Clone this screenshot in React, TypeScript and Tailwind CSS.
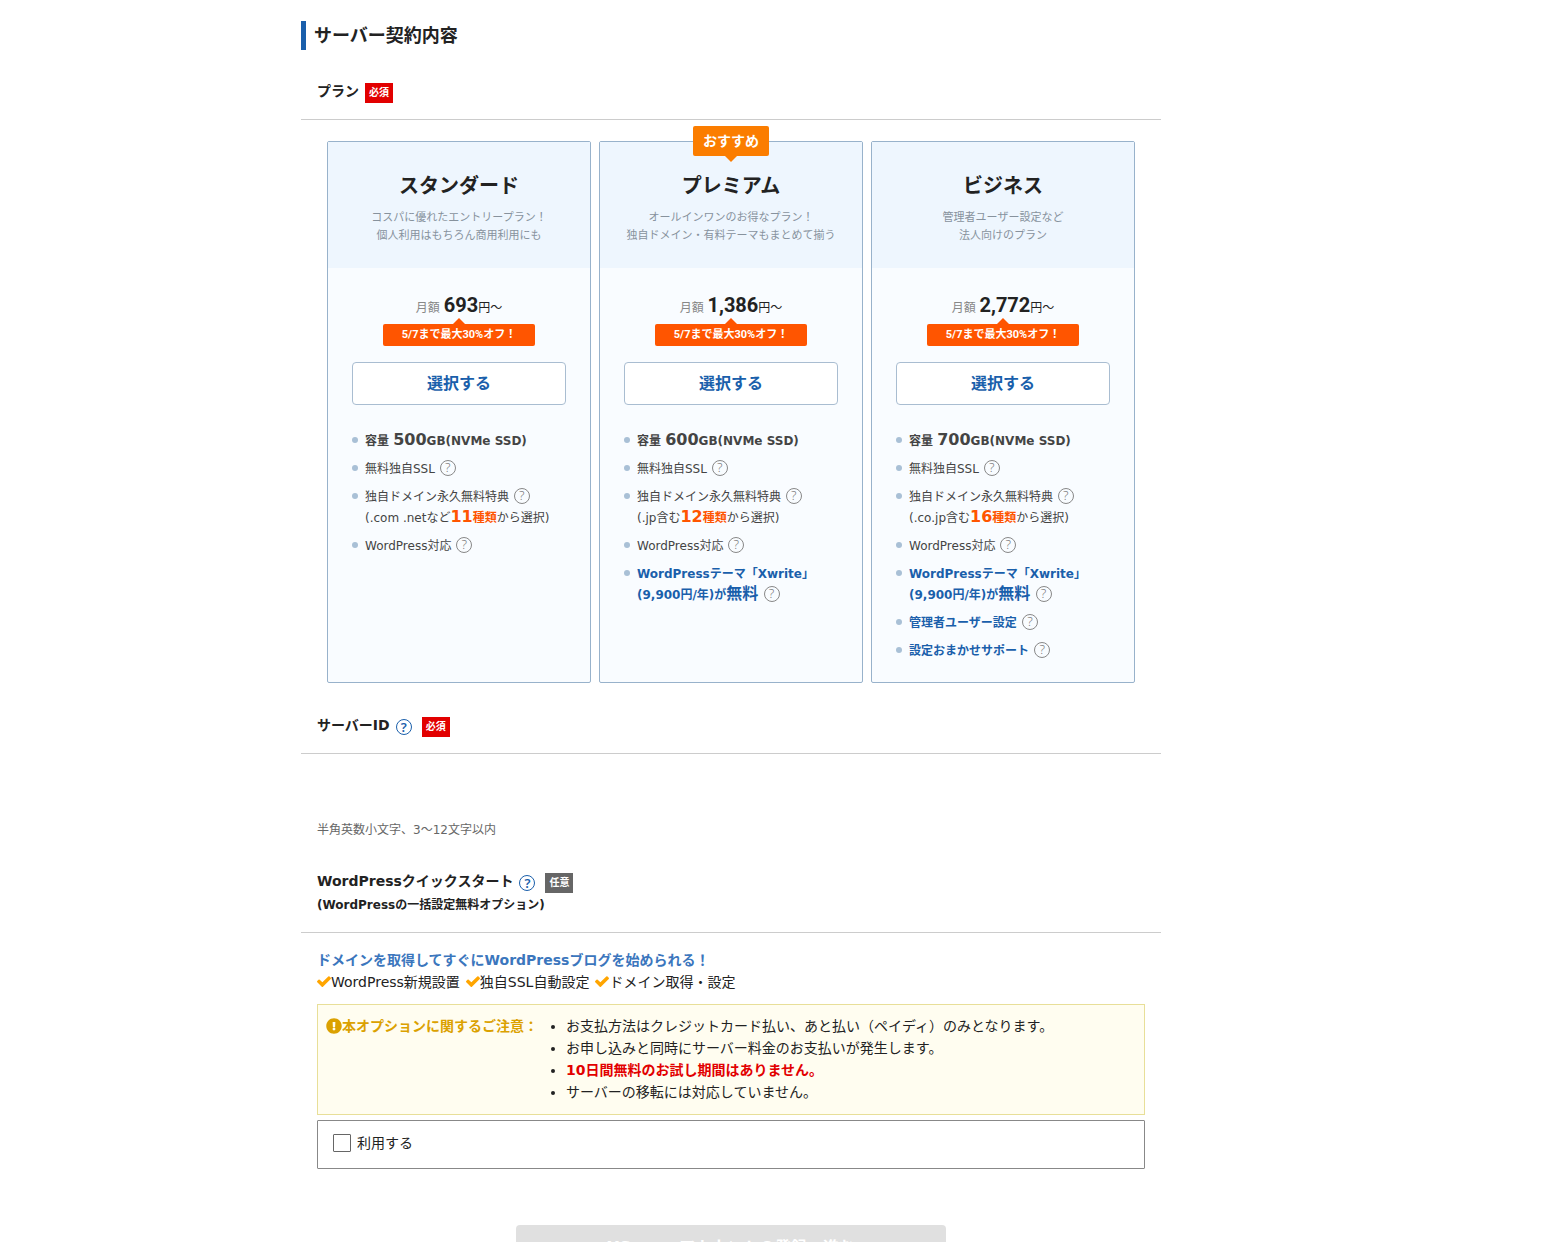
import type { ReactNode } from 'react';
import { FaExclamationCircle } from 'react-icons/fa';

interface Feature {
  content: ReactNode;
  help?: boolean;
  strong?: boolean;
}

interface Plan {
  name: string;
  description: [string, string];
  price: string;
  recommended?: boolean;
  features: Feature[];
}

function Capacity({ size }: { size: string }) {
  return (
    <b>
      容量 <span className="text-base leading-none">{size}</span>GB(NVMe SSD)
    </b>
  );
}

function Domain({ types, count }: { types: string; count: string }) {
  return (
    <>
      独自ドメイン永久無料特典 <HelpButton />
      <br />
      ({types}
      <b className="text-[#ff5500]">
        <span className="text-base leading-none">{count}</span>種類
      </b>
      から選択)
    </>
  );
}

const themeFeature: Feature = {
  strong: true,
  help: true,
  content: (
    <>
      WordPressテーマ「Xwrite」
      <br />
      (9,900円/年)が<span className="text-base leading-none">無料</span>
    </>
  ),
};

const plans: Plan[] = [
  {
    name: 'スタンダード',
    description: ['コスパに優れたエントリープラン！', '個人利用はもちろん商用利用にも'],
    price: '693',
    features: [
      { content: <Capacity size="500" /> },
      { content: '無料独自SSL', help: true },
      { content: <Domain types=".com .netなど" count="11" /> },
      { content: 'WordPress対応', help: true },
    ],
  },
  {
    name: 'プレミアム',
    description: ['オールインワンのお得なプラン！', '独自ドメイン・有料テーマもまとめて揃う'],
    price: '1,386',
    recommended: true,
    features: [
      { content: <Capacity size="600" /> },
      { content: '無料独自SSL', help: true },
      { content: <Domain types=".jp含む" count="12" /> },
      { content: 'WordPress対応', help: true },
      themeFeature,
    ],
  },
  {
    name: 'ビジネス',
    description: ['管理者ユーザー設定など', '法人向けのプラン'],
    price: '2,772',
    features: [
      { content: <Capacity size="700" /> },
      { content: '無料独自SSL', help: true },
      { content: <Domain types=".co.jp含む" count="16" /> },
      { content: 'WordPress対応', help: true },
      themeFeature,
      { content: '管理者ユーザー設定', help: true, strong: true },
      { content: '設定おまかせサポート', help: true, strong: true },
    ],
  },
];

function CheckIcon() {
  return (
    <svg viewBox="121 203 1550 1550" className="size-[14px] fill-[#ffa500]" aria-hidden="true">
      <path d="M1671 566q0 40-28 68l-724 724-136 136q-28 28-68 28t-68-28l-136-136-362-362q-28-28-28-68t28-68l136-136q28-28 68-28t68 28l294 295 656-657q28-28 68-28t68 28l136 136q28 28 28 68z" />
    </svg>
  );
}

function HelpButton({ blue }: { blue?: boolean }) {
  return (
    <button
      type="button"
      aria-label="ヘルプ"
      className={
        blue
          ? 'inline-flex size-4 items-center justify-center rounded-full border border-[#1a5fab] font-["Noto_Sans",sans-serif] text-[13px] leading-none font-semibold text-[#1a5fab]'
          : 'ml-px inline-flex size-4 items-center justify-center rounded-full border border-[#888] align-[1px] font-["Noto_Sans",sans-serif] text-[13px] leading-none font-light text-[#777]'
      }
    >
      ?
    </button>
  );
}

function Badge({ required }: { required?: boolean }) {
  return (
    <span
      className={
        required
          ? 'flex h-5 items-center bg-[#e20000] px-1 text-[10px] font-bold text-white'
          : 'flex h-5 items-center bg-[#666] px-1 text-[10px] font-bold text-white'
      }
    >
      {required ? '必須' : '任意'}
    </span>
  );
}

function PlanCard({ plan }: { plan: Plan }) {
  return (
    <section className="relative flex-1 rounded-xs border border-[#98b2cb] bg-[#f9fcff]">
      {plan.recommended && (
        <div className="absolute -top-4 left-1/2 flex h-[30px] -translate-x-1/2 items-center rounded-xs bg-[#fb7d00] px-[10px] text-sm font-bold whitespace-nowrap text-white">
          おすすめ
          <span className="absolute top-full left-1/2 -translate-x-1/2 border-x-6 border-t-6 border-x-transparent border-t-[#fb7d00]" />
        </div>
      )}
      <div className="bg-[#eef6fe] pt-[29px] pb-[23px] text-center">
        <h3 className="text-xl leading-[30px] font-bold">{plan.name}</h3>
        <p className="mt-2 text-[11px] leading-[18px] text-[#87929d]">
          {plan.description[0]}
          <br />
          {plan.description[1]}
        </p>
      </div>
      <div className="px-6 pt-[26px] pb-5">
        <p className="text-center text-xs leading-7">
          <span className="text-[#888]">月額</span>{' '}
          <span className="font-[Roboto,sans-serif] text-xl leading-none font-bold">{plan.price}</span>
          円～
        </p>
        <div className="relative mx-auto mt-[2px] h-[22px] w-[152px] rounded-xs bg-[#ff5500] text-center font-[Roboto,'Noto_Sans_CJK_JP',sans-serif] text-[11px] leading-[22px] font-bold text-white">
          <span className="absolute bottom-full left-1/2 -translate-x-1/2 border-x-6 border-b-6 border-x-transparent border-b-[#ff5500]" />
          5/7まで最大30%オフ！
        </div>
        <button
          type="button"
          className="mt-4 h-[43px] w-full rounded-sm border border-[#a9bdd1] bg-white text-base font-bold text-[#1a5fab]"
        >
          選択する
        </button>
        <ul className="mt-[26px] flex flex-col gap-[7px] text-xs leading-[21px] text-[#444]">
          {plan.features.map((feature, i) => (
            <li key={i} className="flex gap-[7px]">
              <span className="mt-[6px] size-[6px] shrink-0 rounded-full bg-[#a9c0d6]" />
              <div className={feature.strong ? 'font-bold text-[#1a5fab]' : ''}>
                {feature.content}
                {feature.help && (
                  <>
                    {' '}
                    <HelpButton />
                  </>
                )}
              </div>
            </li>
          ))}
        </ul>
      </div>
    </section>
  );
}

export default function App() {
  return (
    <div className="bg-white pr-[94px] font-['DejaVu_Sans','Noto_Sans_CJK_JP',sans-serif] text-sm text-[#222]">
      <main className="mx-auto max-w-[860px] pt-[21px]">
        <h2 className="border-l-5 border-[#1a5fab] pl-2 text-lg leading-[29px] font-bold">
          サーバー契約内容
        </h2>

        {/* Plan */}
        <div className="mt-[33px] border-b border-[#ccc] px-4 pb-4">
          <div className="flex h-5 items-center gap-[6px]">
            <span className="pb-1 font-bold">プラン</span>
            <Badge required />
          </div>
        </div>
        <div className="mt-[21px] flex gap-2 px-[26px]">
          {plans.map((plan) => (
            <PlanCard key={plan.name} plan={plan} />
          ))}
        </div>

        {/* Server ID */}
        <div className="mt-[34px] border-b border-[#ccc] px-4 pb-4">
          <div className="flex h-5 items-center gap-[6px]">
            <label htmlFor="server-id" className="pb-1 font-bold">
              サーバーID
            </label>
            <HelpButton blue />
            <span className="ml-1">
              <Badge required />
            </span>
          </div>
        </div>
        <div className="px-4 pt-4">
          <input id="server-id" type="text" className="block h-11 w-full outline-none" />
          <p className="mt-1 text-xs leading-6 text-[#666]">半角英数小文字、3～12文字以内</p>
        </div>

        {/* Quick start */}
        <div className="mt-[31px] border-b border-[#ccc] px-4 pb-[15px]">
          <div className="flex h-5 items-center gap-[6px]">
            <span className="pb-1 font-bold">WordPressクイックスタート</span>
            <HelpButton blue />
            <span className="ml-1">
              <Badge />
            </span>
          </div>
          <p className="text-xs leading-6 font-bold">(WordPressの一括設定無料オプション)</p>
        </div>
        <div className="px-4 pt-4">
          <p className="leading-[22px] font-bold text-[#3b76bd]">
            ドメインを取得してすぐにWordPressブログを始められる！
          </p>
          <ul className="flex gap-[6px] leading-[22px]">
            {['WordPress新規設置', '独自SSL自動設定', 'ドメイン取得・設定'].map((item) => (
              <li key={item} className="flex items-center">
                <CheckIcon />
                {item}
              </li>
            ))}
          </ul>
          <div className="mt-[11px] flex border border-[#e8df98] bg-[#fffdf0] px-2 pt-[10px] pb-[11px] leading-[22px]">
            <p className="flex h-[22px] shrink-0 items-center font-bold text-[#dba100]">
              <FaExclamationCircle className="size-4" />
              本オプションに関するご注意：
            </p>
            <ul className="list-disc pl-7">
              <li>お支払方法はクレジットカード払い、あと払い（ペイディ）のみとなります。</li>
              <li>お申し込みと同時にサーバー料金のお支払いが発生します。</li>
              <li className="font-bold text-[#e20000] marker:text-[#222]">
                10日間無料のお試し期間はありません。
              </li>
              <li>サーバーの移転には対応していません。</li>
            </ul>
          </div>
          <label className="mt-[5px] flex h-[49px] items-center gap-[6px] rounded-[1px] border border-[#888] px-[15px] pb-1">
            <input
              type="checkbox"
              className="size-[18px] appearance-none rounded-[1px] border border-[#666] bg-white"
            />
            利用する
          </label>
        </div>

        <button
          type="button"
          disabled
          className="mx-auto mt-14 block h-[46px] w-1/2 rounded-sm bg-[#e0e0e0] text-base font-bold text-white"
        >
          XServerアカウントの登録へ進む
        </button>
      </main>
    </div>
  );
}
